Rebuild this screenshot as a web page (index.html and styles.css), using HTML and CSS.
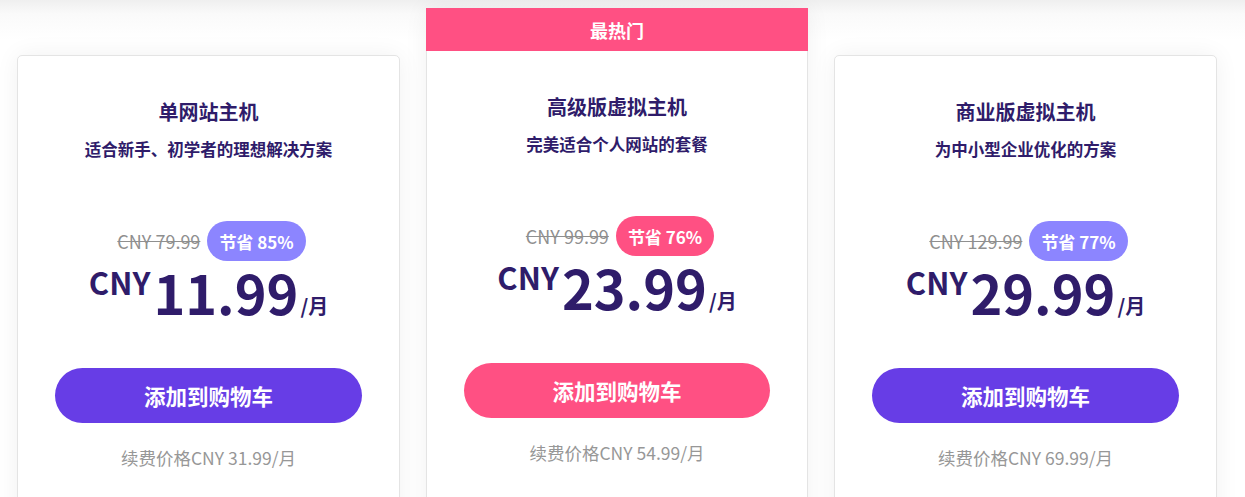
FILE: index.html
```html
<!DOCTYPE html>
<html lang="zh-CN">
<head>
<meta charset="utf-8">
<title>价格方案</title>
<link rel="stylesheet" href="styles.css">
</head>
<body>
<main class="plans">
  <article class="plan">
    <div class="plan-body">
      <h2 class="plan-title">单网站主机</h2>
      <p class="plan-desc">适合新手、初学者的理想解决方案</p>
      <div class="deal">
        <span class="old-price">CNY 79.99</span>
        <span class="save">节省 85%</span>
      </div>
      <div class="price">
        <span class="cur">CNY</span><span class="amount">11.99</span><span class="per">/月</span>
      </div>
      <button class="cart-btn" type="button">添加到购物车</button>
      <p class="renew">续费价格CNY 31.99/月</p>
    </div>
  </article>

  <article class="plan plan--featured">
    <div class="plan-ribbon">最热门</div>
    <div class="plan-body">
      <h2 class="plan-title">高级版虚拟主机</h2>
      <p class="plan-desc">完美适合个人网站的套餐</p>
      <div class="deal">
        <span class="old-price">CNY 99.99</span>
        <span class="save">节省 76%</span>
      </div>
      <div class="price">
        <span class="cur">CNY</span><span class="amount">23.99</span><span class="per">/月</span>
      </div>
      <button class="cart-btn" type="button">添加到购物车</button>
      <p class="renew">续费价格CNY 54.99/月</p>
    </div>
  </article>

  <article class="plan">
    <div class="plan-body">
      <h2 class="plan-title">商业版虚拟主机</h2>
      <p class="plan-desc">为中小型企业优化的方案</p>
      <div class="deal">
        <span class="old-price">CNY 129.99</span>
        <span class="save">节省 77%</span>
      </div>
      <div class="price">
        <span class="cur">CNY</span><span class="amount">29.99</span><span class="per">/月</span>
      </div>
      <button class="cart-btn" type="button">添加到购物车</button>
      <p class="renew">续费价格CNY 69.99/月</p>
    </div>
  </article>
</main>
</body>
</html>
```

FILE: styles.css
```css
* { box-sizing: border-box; }

html, body {
  margin: 0;
  padding: 0;
}

body {
  background: linear-gradient(to bottom, #efefef 0, #fafafa 14px, #ffffff 40px);
  font-family: "Noto Sans CJK SC", "Noto Sans", sans-serif;
  color: #2f1c6a;
  height: 497px;
  overflow: hidden;
}

.plans {
  display: flex;
  align-items: flex-start;
  gap: 26px;
  padding: 8px 0 0 17px;
}

.plan {
  width: 383px;
  flex: 0 0 383px;
  margin-top: 47px;
  background: #fff;
  border: 1px solid #e4e4e4;
  border-radius: 5px;
  box-shadow: 0 0 24px rgba(0, 0, 0, 0.06);
  min-height: 520px;
}

.plan--featured {
  margin-top: 0;
  width: 382px;
  flex-basis: 382px;
  border-top: none;
  border-radius: 0 0 5px 5px;
}

.plan-ribbon {
  margin: 0 -1px;
  height: 43px;
  background: #ff5083;
  color: #fff;
  font-size: 18px;
  font-weight: 700;
  display: flex;
  align-items: center;
  justify-content: center;
}

.plan-body {
  display: flex;
  flex-direction: column;
  align-items: center;
  padding: 42px 37px 40px;
}

.plan-title {
  margin: 0;
  font-size: 20px;
  line-height: 28px;
  font-weight: 700;
}

.plan-desc {
  margin: 11px 0 0;
  font-size: 16.5px;
  line-height: 24px;
  font-weight: 700;
}

.deal {
  margin-top: 60px;
  display: flex;
  align-items: center;
  gap: 7px;
  margin-left: 6px;
}

.old-price {
  font-size: 18px;
  color: #8f8f8f;
  text-decoration: line-through;
}

.save {
  height: 40px;
  padding: 0 12px;
  border-radius: 20px;
  background: #8c85ff;
  color: #fff;
  font-size: 17px;
  font-weight: 700;
  display: flex;
  align-items: center;
}

.plan--featured .save {
  background: #ff5083;
}

.price {
  margin-top: 4px;
  display: flex;
  align-items: flex-start;
  font-weight: 700;
  color: #2f1c6a;
}

.cur {
  font-size: 31px;
  line-height: 1;
  margin-top: 1px;
  margin-right: 3px;
}

.amount {
  font-size: 54px;
  line-height: 1;
}

.per {
  align-self: flex-end;
  font-size: 20px;
  line-height: 1;
  margin-bottom: 3px;
  margin-left: 2px;
}

.cart-btn {
  margin-top: 49px;
  width: 100%;
  height: 55px;
  border: none;
  border-radius: 28px;
  background: #673de6;
  color: #fff;
  font-family: inherit;
  font-size: 21.5px;
  font-weight: 700;
  cursor: pointer;
}

.plan--featured .cart-btn {
  background: #ff5083;
}

.renew {
  margin: 23px 0 0;
  font-size: 17.5px;
  line-height: 24px;
  color: #979797;
}
```
